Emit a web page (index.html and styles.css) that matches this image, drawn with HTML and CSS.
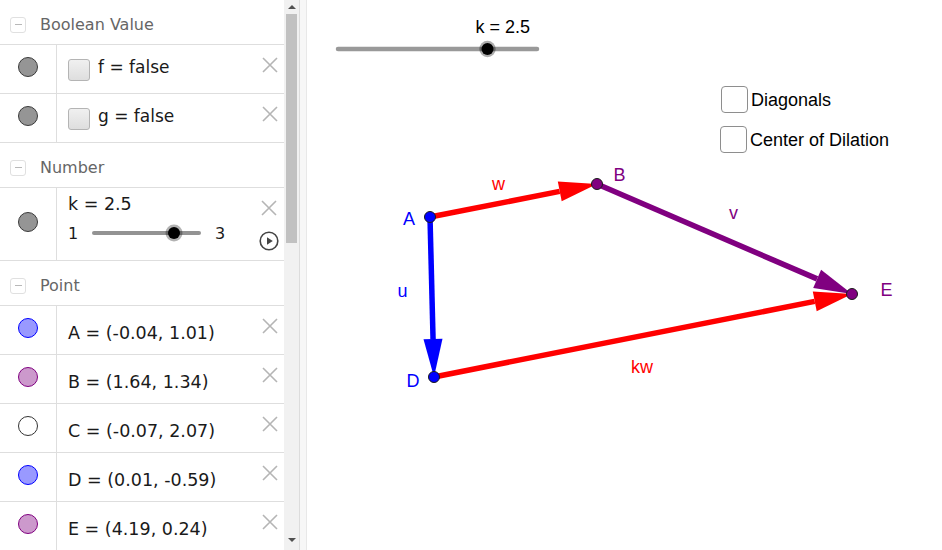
FILE: index.html
```html
<!DOCTYPE html>
<html>
<head>
<meta charset="utf-8">
<title>GeoGebra</title>
<link rel="stylesheet" href="styles.css">
</head>
<body>
<div class="app">
  <div class="algebra">
    <div class="list">
      <div class="group-head"><span class="toggle"><span class="toggle-bar"></span></span><span class="group-title">Boolean Value</span></div>
      <div class="item">
        <div class="marble-cell"><span class="marble m-gray"></span></div>
        <div class="item-body">
          <span class="bool-box"></span><span class="bool-text">f = false</span>
          <span class="del"><svg width="16" height="16" viewBox="0 0 16 16"><path d="M1 1L15 15M15 1L1 15"/></svg></span>
        </div>
      </div>
      <div class="item">
        <div class="marble-cell"><span class="marble m-gray"></span></div>
        <div class="item-body">
          <span class="bool-box"></span><span class="bool-text">g = false</span>
          <span class="del"><svg width="16" height="16" viewBox="0 0 16 16"><path d="M1 1L15 15M15 1L1 15"/></svg></span>
        </div>
      </div>
      <div class="group-head"><span class="toggle"><span class="toggle-bar"></span></span><span class="group-title">Number</span></div>
      <div class="item item-tall">
        <div class="marble-cell"><span class="marble m-gray"></span></div>
        <div class="item-body">
          <div class="num-col">
            <span class="num-text">k = 2.5</span>
            <div class="av-slider">
              <span class="av-min">1</span>
              <span class="av-track"><span class="av-thumb" style="left: 75%"></span></span>
              <span class="av-max">3</span>
            </div>
          </div>
          <div class="num-actions">
            <span class="del del-inline"><svg width="16" height="16" viewBox="0 0 16 16"><path d="M1 1L15 15M15 1L1 15"/></svg></span>
            <span class="play"><svg width="20" height="20" viewBox="0 0 20 20"><circle cx="10" cy="10" r="8.8"/><path class="play-tri" d="M8 6.2L13.8 10L8 13.8Z"/></svg></span>
          </div>
        </div>
      </div>
      <div class="group-head"><span class="toggle"><span class="toggle-bar"></span></span><span class="group-title">Point</span></div>
      <div class="item">
        <div class="marble-cell"><span class="marble m-blue"></span></div>
        <div class="item-body"><span class="pt-text">A = (-0.04, 1.01)</span><span class="del"><svg width="16" height="16" viewBox="0 0 16 16"><path d="M1 1L15 15M15 1L1 15"/></svg></span></div>
      </div>
      <div class="item">
        <div class="marble-cell"><span class="marble m-purple"></span></div>
        <div class="item-body"><span class="pt-text">B = (1.64, 1.34)</span><span class="del"><svg width="16" height="16" viewBox="0 0 16 16"><path d="M1 1L15 15M15 1L1 15"/></svg></span></div>
      </div>
      <div class="item">
        <div class="marble-cell"><span class="marble m-white"></span></div>
        <div class="item-body"><span class="pt-text">C = (-0.07, 2.07)</span><span class="del"><svg width="16" height="16" viewBox="0 0 16 16"><path d="M1 1L15 15M15 1L1 15"/></svg></span></div>
      </div>
      <div class="item">
        <div class="marble-cell"><span class="marble m-blue"></span></div>
        <div class="item-body"><span class="pt-text">D = (0.01, -0.59)</span><span class="del"><svg width="16" height="16" viewBox="0 0 16 16"><path d="M1 1L15 15M15 1L1 15"/></svg></span></div>
      </div>
      <div class="item">
        <div class="marble-cell"><span class="marble m-purple"></span></div>
        <div class="item-body"><span class="pt-text">E = (4.19, 0.24)</span><span class="del"><svg width="16" height="16" viewBox="0 0 16 16"><path d="M1 1L15 15M15 1L1 15"/></svg></span></div>
      </div>
    </div>
    <div class="scrollbar">
      <div class="sb-btn"><span class="arrow-up"></span></div>
      <div class="sb-thumb"></div>
      <div class="sb-space"></div>
      <div class="sb-btn sb-btn-down"><span class="arrow-down"></span></div>
    </div>
  </div>
  <div class="splitter"></div>
  <div class="graphics">
    <svg class="canvas" width="635" height="550" viewBox="307 0 635 550">
      <g class="gg-slider">
        <text class="lbl lbl-black" x="475.5" y="33">k = 2.5</text>
        <line x1="338" y1="49" x2="537" y2="49" class="gs-track"/>
        <circle cx="487.5" cy="49" r="8.2" class="gs-halo"/>
        <circle cx="487.5" cy="49" r="6" class="gs-knob"/>
      </g>
      <g class="vec vec-red">
        <line x1="434" y1="377" x2="814.7" y2="301.4"/>
        <polygon points="852,294 816.7,311.2 812.8,291.6"/>
      </g>
      <g class="vec vec-purple">
        <line x1="597" y1="184" x2="817.1" y2="278.9"/>
        <polygon points="852,294 813.2,288.1 821.1,269.7"/>
      </g>
      <g class="vec vec-red">
        <line x1="430" y1="217" x2="559.7" y2="191.4"/>
        <polygon points="597,184 561.7,201.2 557.8,181.6"/>
      </g>
      <g class="vec vec-blue">
        <line x1="430" y1="217" x2="433.05" y2="339"/>
        <polygon points="434,377 423.5,339.2 442.5,338.8"/>
      </g>
      <circle cx="430" cy="217" r="5.5" class="pt pt-blue"/>
      <circle cx="597" cy="184" r="5.5" class="pt pt-purple"/>
      <circle cx="434" cy="377" r="5.5" class="pt pt-blue"/>
      <circle cx="852" cy="294" r="5.5" class="pt pt-purple"/>
      <text class="lbl lbl-blue" x="403" y="225">A</text>
      <text class="lbl lbl-purple" x="613.5" y="181">B</text>
      <text class="lbl lbl-blue" x="406.5" y="387">D</text>
      <text class="lbl lbl-purple" x="880.5" y="296">E</text>
      <text class="lbl lbl-red" x="492" y="190">w</text>
      <text class="lbl lbl-purple" x="729" y="219">v</text>
      <text class="lbl lbl-blue" x="397.5" y="297">u</text>
      <text class="lbl lbl-red" x="631" y="372.5">kw</text>
    </svg>
    <label class="gcheck gcheck-diag"><span class="gbox"></span><span class="gtext">Diagonals</span></label>
    <label class="gcheck gcheck-center"><span class="gbox"></span><span class="gtext">Center of Dilation</span></label>
  </div>
</div>
</body>
</html>
```
FILE: styles.css
```css
html, body {
  margin: 0;
  padding: 0;
  background: #ffffff;
}
body {
  width: 942px;
  height: 550px;
  overflow: hidden;
  font-family: "DejaVu Sans", "Noto Sans", sans-serif;
}
.app {
  display: flex;
  width: 942px;
  height: 550px;
}

/* ---------- algebra view ---------- */
.algebra {
  display: flex;
  width: 299px;
  height: 550px;
  flex: none;
}
.list {
  width: 284px;
  height: 550px;
  overflow: hidden;
  display: flex;
  flex-direction: column;
}
.group-head {
  flex: none;
  height: 45px;
  box-sizing: border-box;
  border-bottom: 1px solid #dedede;
  display: flex;
  align-items: center;
  padding: 5px 0 0 10px;
}
.toggle {
  width: 16px;
  height: 16px;
  box-sizing: border-box;
  border: 1px solid #e0e0e0;
  border-radius: 3px;
  display: flex;
  align-items: center;
  justify-content: center;
}
.toggle-bar {
  width: 7px;
  height: 1.5px;
  background: #b8b8b8;
}
.group-title {
  margin-left: 14px;
  font-size: 16px;
  color: #666666;
}
.item {
  flex: none;
  height: 49px;
  box-sizing: border-box;
  border-bottom: 1px solid #dedede;
  display: flex;
}
.item-tall {
  height: 73px;
}
.marble-cell {
  width: 57px;
  flex: none;
  box-sizing: border-box;
  border-right: 1px solid #dedede;
  display: flex;
  align-items: center;
  justify-content: center;
  padding-bottom: 4px;
}
.marble {
  width: 20px;
  height: 20px;
  box-sizing: border-box;
  border-radius: 50%;
  border: 1px solid #3a3a3a;
}
.m-gray { background: #959595; }
.m-blue { background: #9999ff; border-color: #0000ff; }
.m-purple { background: #cc99cc; border-color: #800080; }
.m-white { background: #ffffff; border-color: #333333; }

.item-body {
  flex: 1;
  display: flex;
  align-items: center;
  padding-left: 11px;
  color: #1a1a1a;
}
.bool-box {
  width: 22px;
  height: 22px;
  box-sizing: border-box;
  border: 1px solid #b4b4b4;
  border-radius: 3px;
  background: linear-gradient(#f0f0f0, #dedede);
  margin-right: 8px;
  margin-top: 1px;
}
.bool-text {
  font-size: 17px;
  margin-bottom: 4px;
  white-space: nowrap;
}
.pt-text {
  font-size: 17.5px;
  padding-top: 5px;
  white-space: nowrap;
}
.del {
  margin-left: auto;
  margin-right: 6px;
  align-self: flex-start;
  margin-top: 12px;
  width: 16px;
  height: 16px;
  display: flex;
}
.del svg path {
  stroke: #b5b5b5;
  stroke-width: 1.6;
  fill: none;
}
.del-inline {
  margin: 12px 0 0 0;
  align-self: auto;
}
.num-col {
  display: flex;
  flex-direction: column;
  align-self: flex-start;
  padding-top: 6px;
}
.num-text {
  font-size: 17.5px;
  line-height: 20px;
  white-space: nowrap;
}
.av-slider {
  display: flex;
  align-items: center;
  height: 20px;
  margin-top: 9px;
  font-size: 16px;
}
.av-min {
  width: 24px;
}
.av-track {
  position: relative;
  width: 109px;
  height: 4.5px;
  border-radius: 3px;
  background: #939393;
}
.av-thumb {
  position: absolute;
  top: 50%;
  width: 12px;
  height: 12px;
  margin: -6px 0 0 -6px;
  border-radius: 50%;
  background: #000000;
  box-shadow: 0 0 0 2.5px rgba(0, 0, 0, 0.3);
}
.av-max {
  margin-left: 14px;
}
.num-actions {
  margin-left: auto;
  margin-right: 5px;
  align-self: flex-start;
  display: flex;
  flex-direction: column;
  align-items: center;
}
.play {
  margin-top: 15px;
  width: 20px;
  height: 20px;
  display: flex;
}
.play circle {
  fill: none;
  stroke: #444444;
  stroke-width: 1.6;
}
.play .play-tri {
  fill: #444444;
}

/* ---------- scrollbar ---------- */
.scrollbar {
  width: 15px;
  height: 550px;
  background: #f1f1f1;
  display: flex;
  flex-direction: column;
  align-items: center;
}
.sb-btn {
  height: 14px;
  width: 15px;
  display: flex;
  align-items: center;
  justify-content: center;
}
.sb-btn-down {
  height: 20px;
}
.arrow-up {
  width: 0;
  height: 0;
  border-left: 4px solid transparent;
  border-right: 4px solid transparent;
  border-bottom: 4px solid #505050;
}
.arrow-down {
  width: 0;
  height: 0;
  border-left: 4px solid transparent;
  border-right: 4px solid transparent;
  border-top: 4px solid #505050;
}
.sb-thumb {
  width: 11px;
  height: 229px;
  background: #c1c1c1;
}
.sb-space {
  flex: 1;
}

/* ---------- splitter ---------- */
.splitter {
  width: 8px;
  flex: none;
  box-sizing: border-box;
  height: 550px;
  background: #f7f7f7;
  border-left: 1px solid #dcdcdc;
  border-right: 1px solid #e8e8e8;
}

/* ---------- graphics view ---------- */
.graphics {
  position: relative;
  flex: 1;
  height: 550px;
  background: #ffffff;
}
.canvas {
  display: block;
}
.lbl {
  font-family: "Liberation Sans", Arial, sans-serif;
  font-size: 18px;
}
.lbl-black { fill: #000000; }
.lbl-blue { fill: #0000ff; }
.lbl-purple { fill: #800080; }
.lbl-red { fill: #ff0000; }
.gs-track {
  stroke: #999999;
  stroke-width: 4.5;
  stroke-linecap: round;
}
.gs-halo { fill: rgba(0, 0, 0, 0.32); }
.gs-knob { fill: #000000; }
.vec line {
  stroke-width: 5.5;
}
.vec-red line { stroke: #ff0000; }
.vec-red polygon { fill: #ff0000; }
.vec-purple line { stroke: #800080; }
.vec-purple polygon { fill: #800080; }
.vec-blue line { stroke: #0000ff; }
.vec-blue polygon { fill: #0000ff; }
.pt {
  stroke: #1a1a1a;
  stroke-width: 1;
}
.pt-blue { fill: #0000ff; }
.pt-purple { fill: #800080; }

.gcheck {
  position: absolute;
  display: flex;
  align-items: center;
  font-family: "Liberation Sans", Arial, sans-serif;
  font-size: 18px;
  color: #000000;
}
.gcheck-diag {
  left: 414px;
  top: 86px;
}
.gcheck-center {
  left: 413px;
  top: 126px;
}
.gbox {
  width: 27px;
  height: 27px;
  box-sizing: border-box;
  border: 1.5px solid #8e8e8e;
  border-radius: 4px;
  background: #ffffff;
  margin-right: 3px;
}
.gtext {
  white-space: nowrap;
  padding-top: 1px;
}
```
